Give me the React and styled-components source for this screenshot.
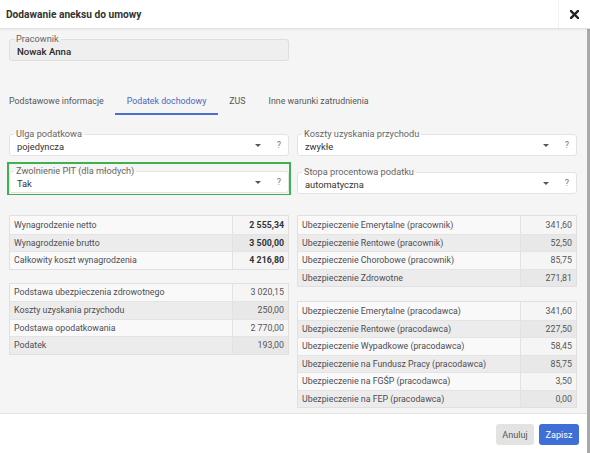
import React from 'react';
import styled, { createGlobalStyle, css } from 'styled-components';

const Global = createGlobalStyle`
  html, body { margin: 0; padding: 0; background: #fff; }
  body { font-family: Roboto, "Noto Sans", sans-serif; color: #4a4a4a; }
`;

const summary = [
  ['Wynagrodzenie netto', '2 555,34'],
  ['Wynagrodzenie brutto', '3 500,00'],
  ['Całkowity koszt wynagrodzenia', '4 216,80'],
];

const taxBase = [
  ['Podstawa ubezpieczenia zdrowotnego', '3 020,15'],
  ['Koszty uzyskania przychodu', '250,00'],
  ['Podstawa opodatkowania', '2 770,00'],
  ['Podatek', '193,00'],
];

const employee = [
  ['Ubezpieczenie Emerytalne (pracownik)', '341,60'],
  ['Ubezpieczenie Rentowe (pracownik)', '52,50'],
  ['Ubezpieczenie Chorobowe (pracownik)', '85,75'],
  ['Ubezpieczenie Zdrowotne', '271,81'],
];

const employer = [
  ['Ubezpieczenie Emerytalne (pracodawca)', '341,60'],
  ['Ubezpieczenie Rentowe (pracodawca)', '227,50'],
  ['Ubezpieczenie Wypadkowe (pracodawca)', '58,45'],
  ['Ubezpieczenie na Fundusz Pracy (pracodawca)', '85,75'],
  ['Ubezpieczenie na FGŚP (pracodawca)', '3,50'],
  ['Ubezpieczenie na FEP (pracodawca)', '0,00'],
];

const tabs = ['Podstawowe informacje', 'Podatek dochodowy', 'ZUS', 'Inne warunki zatrudnienia'];

function Select({ label, value }) {
  return (
    <Field>
      <Legend>{label}</Legend>
      <Value>{value}</Value>
      <Caret />
      <Help>?</Help>
    </Field>
  );
}

function DataTable({ rows, bold }) {
  return (
    <Table>
      {rows.map(([label, value], i) => (
        <Row key={label} even={i % 2 === 1}>
          <Label>{label}</Label>
          <Amount bold={bold}>{value}</Amount>
        </Row>
      ))}
    </Table>
  );
}

export default function App() {
  return (
    <Dialog>
      <Global />
      <Header>
        <Title>Dodawanie aneksu do umowy</Title>
        <Close aria-label="Zamknij">
          <svg width="9" height="9" viewBox="0 0 9 9">
            <path d="M1 1L8 8M8 1L1 8" stroke="#222" strokeWidth="2.4" strokeLinecap="square" />
          </svg>
        </Close>
      </Header>

      <Content>
        <Body>
          <EmployeeField>
            <Legend disabled>Pracownik</Legend>
            <Value strong>Nowak Anna</Value>
          </EmployeeField>

          <Tabs>
            {tabs.map(t => (
              <Tab key={t} active={t === 'Podatek dochodowy'}>{t}</Tab>
            ))}
          </Tabs>

          <FormGrid>
            <Select label="Ulga podatkowa" value="pojedyncza" />
            <Select label="Koszty uzyskania przychodu" value="zwykłe" />
            <Highlight>
              <Select label="Zwolnienie PIT (dla młodych)" value="Tak" />
            </Highlight>
            <Select label="Stopa procentowa podatku" value="automatyczna" />
          </FormGrid>

          <Columns>
            <Stack>
              <DataTable rows={summary} bold />
              <DataTable rows={taxBase} />
            </Stack>
            <Stack wide>
              <DataTable rows={employee} />
              <DataTable rows={employer} />
            </Stack>
          </Columns>
        </Body>

        <Footer>
          <Button>Anuluj</Button>
          <Button primary>Zapisz</Button>
        </Footer>
      </Content>
    </Dialog>
  );
}

const Dialog = styled.div`
  width: 590px;
  height: 453px;
  display: flex;
  flex-direction: column;
  background: #fff;
  overflow: hidden;
`;

const Header = styled.header`
  height: 28px;
  flex: none;
  display: flex;
  align-items: center;
  border-bottom: 1px solid #e2e2e2;
  box-shadow: 0 1px 2px rgba(0, 0, 0, 0.06);
  position: relative;
  z-index: 1;
`;

const Title = styled.h1`
  flex: 1;
  margin: 0;
  padding-left: 6px;
  font-size: 10.2px;
  font-weight: 700;
  color: #333;
`;

const Close = styled.div`
  width: 31px;
  height: 100%;
  display: flex;
  align-items: center;
  justify-content: center;
  border-left: 1px solid #f2f2f2;
`;

const Content = styled.div`
  flex: 1;
  display: flex;
  flex-direction: column;
  border-right: 3px solid #a9a9a9;
`;

const Body = styled.main`
  flex: 1;
  background: #f5f5f5;
  padding: 7px 9px 0 9px;
  border-bottom: 1px solid #e0e0e0;
`;

const Field = styled.div`
  position: relative;
  height: 20px;
  margin-top: 3px;
  display: flex;
  align-items: center;
  padding: 0 7px 0 7px;
  background: #fff;
  border: 1px solid #e3e3e3;
  border-radius: 3px;
`;

const EmployeeField = styled(Field)`
  width: 280px;
  box-sizing: border-box;
  height: 22px;
  background: #efefef;
  border-color: #dedede;
`;

const Legend = styled.span`
  position: absolute;
  left: 4px;
  top: -6px;
  padding: 0 2px;
  font-size: 9.2px;
  line-height: 10px;
  color: #666;
  background: linear-gradient(#f5f5f5 50%, ${p => (p.disabled ? '#efefef' : '#fff')} 50%);
`;

const Value = styled.span`
  flex: 1;
  padding-top: 2px;
  font-size: 9.3px;
  color: #333;
  ${p => p.strong && css`
    font-size: 9.6px;
    font-weight: 500;
    color: #2a2a2a;
  `}
`;

const Caret = styled.span`
  width: 0;
  height: 0;
  margin-right: 16px;
  border-left: 3px solid transparent;
  border-right: 3px solid transparent;
  border-top: 3.5px solid #555;
`;

const Help = styled.span`
  font-size: 9px;
  color: #777;
`;

const Tabs = styled.nav`
  display: flex;
  margin-top: 27px;
  height: 27px;
  align-items: stretch;
`;

const Tab = styled.div`
  display: flex;
  align-items: center;
  padding: 0 11.5px;
  font-size: 8.8px;
  color: #555;
  border-bottom: 2px solid transparent;
  &:first-child { padding-left: 0; }
  ${p => p.active && css`
    color: #4a66c0;
    border-bottom-color: #4a6fd0;
  `}
`;

const FormGrid = styled.div`
  display: grid;
  grid-template-columns: 280px 280px;
  column-gap: 8px;
  row-gap: 13px;
  margin-top: 16px;
`;

const Highlight = styled.div`
  margin: -7px -2px -1px -2px;
  padding: 4px 0 0 0;
  border: 2px solid #3fb24f;
  border-bottom-width: 1px;
`;

const Columns = styled.div`
  display: grid;
  grid-template-columns: 280px 280px;
  column-gap: 8px;
  margin-top: 21px;
`;

const Stack = styled.div`
  display: flex;
  flex-direction: column;
  gap: ${p => (p.wide ? '14px' : '13px')};
`;

const Table = styled.div`
  border: 1px solid #e0e0e0;
`;

const Row = styled.div`
  display: grid;
  grid-template-columns: 1fr 56px;
  height: 17.5px;
  background: ${p => (p.even ? '#ececec' : '#f9f9f9')};
  & + & { border-top: 1px solid #e4e4e4; box-sizing: border-box; }
`;

const Label = styled.div`
  display: flex;
  align-items: center;
  padding-left: 4px;
  font-size: 8.8px;
  color: #4d4d55;
  white-space: nowrap;
`;

const Amount = styled.div`
  display: flex;
  align-items: center;
  justify-content: flex-end;
  padding-right: 4px;
  font-size: 8.8px;
  color: #555;
  border-left: 1px solid #e2e2e2;
  background: rgba(0, 0, 0, 0.015);
  ${p => p.bold && css`
    font-weight: 700;
    color: #333;
  `}
`;

const Footer = styled.footer`
  height: 37px;
  flex: none;
  display: flex;
  align-items: center;
  justify-content: flex-end;
  gap: 5px;
  padding: 2px 8px 0 0;
  background: #fff;
`;

const Button = styled.button`
  height: 21px;
  padding: 0 6.5px;
  border: none;
  border-radius: 3px;
  font-family: Roboto, sans-serif;
  font-size: 9.1px;
  background: #e3e3e3;
  color: #555;
  ${p => p.primary && css`
    background: #3d6fd6;
    color: #fff;
  `}
`;
